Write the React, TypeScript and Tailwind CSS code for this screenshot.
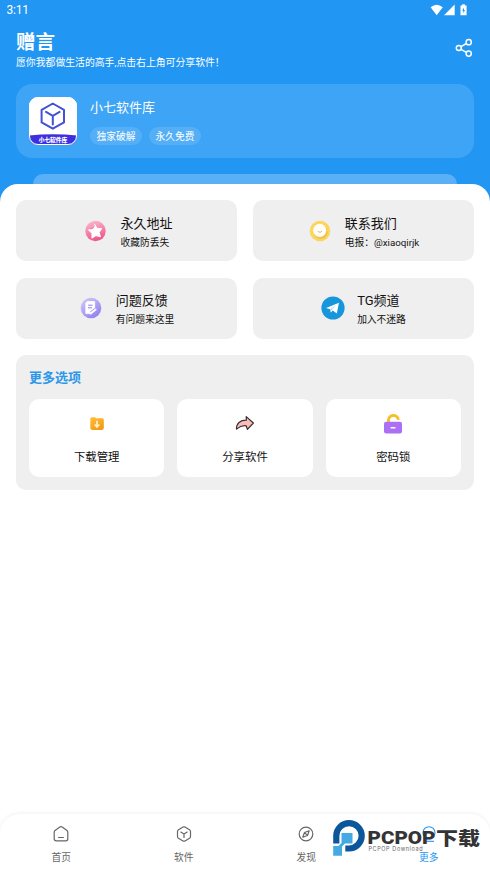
import React from "react";

const StarIcon = () => (
  <svg width="22" height="22" viewBox="0 0 22 22">
    <defs>
      <linearGradient id="pink" x1="0" y1="0" x2="0.3" y2="1">
        <stop offset="0" stopColor="#fbc0d2" />
        <stop offset="1" stopColor="#f0588c" />
      </linearGradient>
    </defs>
    <circle cx="11.500" cy="11" r="10.2" fill="url(#pink)" />
    <path d="M10.7 4.400l2.3 3.900 4.700.3-2.600 3.800 1.400 4.400-4.600-1.200-4 2.600.1-4.900L4.400 10l4.400-1.300z" fill="#fff" stroke="#fff" strokeWidth="1" strokeLinejoin="round" />
    <path d="M6.100 9l3-.9 1.300-2.800" fill="none" stroke="#f06c99" strokeWidth=".9" />
  </svg>
);

const SmileIcon = () => (
  <svg width="22" height="22" viewBox="0 0 22 22">
    <circle cx="11" cy="11" r="10.3" fill="#fbd65c" />
    <circle cx="11.8" cy="12.2" r="6.900" fill="#f3c04c" />
    <circle cx="10.7" cy="10.4" r="6.6" fill="#fffdf5" />
    <path d="M9.200 11.600q1.800 1.800 3.600 0" fill="none" stroke="#d3b277" strokeWidth=".9" strokeLinecap="round" />
  </svg>
);

const NoteIcon = () => (
  <svg width="22" height="22" viewBox="0 0 22 22">
    <defs>
      <linearGradient id="violet" x1="0" y1="0" x2="0.7" y2="1">
        <stop offset="0" stopColor="#d5cdfb" />
        <stop offset="1" stopColor="#9380f0" />
      </linearGradient>
    </defs>
    <circle cx="11" cy="11" r="10.3" fill="url(#violet)" />
    <path d="M7 4.600h7.700v7.400l-4.700 4.600H5.800V6z" fill="#fff" stroke="#fff" strokeWidth=".8" strokeLinejoin="round" />
    <path d="M8.200 8.200h4.400M8 10.800h4" stroke="#8d7ddc" strokeWidth="1" />
    <path d="M10.700 16.600l5-4" stroke="#fff" strokeWidth="1.800" strokeLinecap="round" />
    <path d="M10.200 14.900l4.600-3.500" stroke="#927eee" strokeWidth=".8" />
  </svg>
);

const TelegramIcon = () => (
  <svg width="24" height="24" viewBox="0 0 24 24">
    <circle cx="12" cy="12" r="11.6" fill="#1796db" />
    <path d="M5 12.1L18 6.8l-2.2 10.6-4-2.8-2 1.9-.6-3.300z" fill="#fff" />
    <path d="M9.2 13.2l6.2-4.3-5 5.1-.5 2.3z" fill="#a9d4ed" />
  </svg>
);

const DownloadIcon = () => (
  <svg width="22" height="22" viewBox="0 0 22 22">
    <defs>
      <linearGradient id="folder" x1="0" y1="0" x2="0.6" y2="1">
        <stop offset="0" stopColor="#ffc13d" />
        <stop offset="1" stopColor="#f69a13" />
      </linearGradient>
    </defs>
    <path d="M4.3 5.7q0-1.5 1.5-1.5h3l1.4 1.1h6q1.6 0 1.6 1.6v8.2q0 1.8-1.8 1.8H6.1q-1.8 0-1.8-1.8z" fill="url(#folder)" />
    <path d="M11 7.7v6M8.6 11.500l2.4 2.5 2.4-2.5" fill="none" stroke="#fff4d0" strokeWidth="1.6" />
  </svg>
);

const ForwardIcon = () => (
  <svg width="22" height="22" viewBox="0 0 22 22">
    <path d="M12.2 3.600l7.200 6.400-6 6.400-1.200-3.600c-3.800-.6-6.200.3-9.700 3.300C2.300 10.200 6 7.200 12.400 7.200z" fill="#fcbcb7" stroke="#353033" strokeWidth="1.200" strokeLinejoin="round" />
  </svg>
);

const LockIcon = () => (
  <svg width="22" height="24" viewBox="0 0 22 24">
    <path d="M6.500 12V7.400a4.900 4.600 0 0 1 9.800-.6" fill="none" stroke="#f3c12c" strokeWidth="2.900" />
    <rect x="2" y="8.800" width="18" height="11.700" rx="2" fill="#ab70f4" />
    <rect x="8.500" y="13.900" width="5" height="1.600" rx=".6" fill="#fff" />
  </svg>
);

const HomeIcon = () => (
  <svg width="18" height="18" viewBox="0 0 18 18" fill="none" stroke="#666" strokeWidth="1.200" strokeLinejoin="round" strokeLinecap="round">
    <path d="M2.200 7.200q0-1 .8-1.600l4.800-3.500q1.200-.8 2.400 0L15 5.600q.8.6.8 1.600v6.600q0 2-2 2H4.200q-2 0-2-2zM6.600 12.500h4.800" />
  </svg>
);

const BoxIcon = () => (
  <svg width="18" height="18" viewBox="0 0 18 18" fill="none" stroke="#666" strokeWidth="1.200" strokeLinejoin="round" strokeLinecap="round">
    <path d="M8 2.100q1-.6 2 0l4.500 2.600q1 .6 1 1.700v5.200q0 1.100-1 1.700L10 15.900q-1 .6-2 0l-4.500-2.600q-1-.6-1-1.700V6.400q0-1.100 1-1.700zM5.800 7.100L9 9l3.200-1.900M9 9v3.400" />
  </svg>
);

const CompassIcon = () => (
  <svg width="18" height="18" viewBox="0 0 18 18" fill="none" stroke="#666" strokeWidth="1.200" strokeLinejoin="round">
    <circle cx="9" cy="9" r="6.800" />
    <path d="M12.200 5.800L10.500 10.500 5.800 12.200 7.500 7.500zM7.800 7.800l2.400 2.400" />
  </svg>
);

const ProfileIcon = () => (
  <svg width="18" height="18" viewBox="0 0 18 18" fill="none" stroke="#2196f3" strokeWidth="1.100">
    <circle cx="9" cy="7.700" r="6" />
    <path d="M4 16.300h10" />
  </svg>
);

const links = [
  { icon: <StarIcon />, title: "永久地址", note: "收藏防丢失", width: "w-[22px]", gap: "gap-[14px]", pad: "pl-1" },
  { icon: <SmileIcon />, title: "联系我们", note: "电报：@xiaoqirjk", width: "w-[22px]", gap: "gap-[14px]", pad: "pl-px" },
  { icon: <NoteIcon />, title: "问题反馈", note: "有问题来这里", width: "w-[22px]", gap: "gap-[14px]", pad: "pl-px" },
  { icon: <TelegramIcon />, title: "TG频道", note: "加入不迷路", width: "w-6", gap: "gap-3", pad: "pl-0" },
];

const tools = [
  { icon: <DownloadIcon />, label: "下载管理" },
  { icon: <ForwardIcon />, label: "分享软件" },
  { icon: <LockIcon />, label: "密码锁" },
];

const tabs = [
  { icon: <HomeIcon />, label: "首页", color: "text-[#666]" },
  { icon: <BoxIcon />, label: "软件", color: "text-[#666]" },
  { icon: <CompassIcon />, label: "发现", color: "text-[#666]" },
  { icon: <ProfileIcon />, label: "更多", color: "text-[#2196f3]" },
];

function StatusBar() {
  return (
    <div className="flex h-5 items-center justify-between pl-[6.500px] pr-[22px] text-[12px] leading-5">
      <span className="tracking-[-0.2px]">3:11</span>
      <svg width="38" height="14" viewBox="0 0 38 14" fill="#fff">
        <path d="M.6 4.200Q6.700-.8 12.800 4.200L6.700 12.200z" />
        <path d="M24.700 1.500v10.700H14z" />
        <path d="M30.500 2.500h1.700V1.200h2.700v1.300h1.700v9.700h-6.100z" />
        <path d="M34 4.500l-1.800 3.200h1.100v2.600l1.700-3.300h-1z" fill="#2196f3" />
      </svg>
    </div>
  );
}

function AppLogo() {
  return (
    <svg width="48" height="48" viewBox="0 0 48 48">
      <defs>
        <clipPath id="logo">
          <rect width="48" height="48" rx="9" />
        </clipPath>
      </defs>
      <g clipPath="url(#logo)">
        <rect width="48" height="48" fill="#fff" />
        <path d="M0 38.500Q24 36 48 38.500V48H0z" fill="#3d2fe0" />
      </g>
      <rect x=".5" y=".5" width="47" height="47" rx="8.500" fill="none" stroke="#fff" />
      <path d="M23.800 6.500l11.200 6.300v12.600l-11.200 6.300-11.200-6.300V12.800zM17 14.900l6.800 3.900 6.800-3.900M23.800 18.800v8.700" fill="none" stroke="#4351d6" strokeWidth="2" strokeLinejoin="round" strokeLinecap="round" />
      <text x="24" y="45.300" textAnchor="middle" fontSize="5.800" fontWeight="900" fill="#fff" textLength="28.500">小七软件库</text>
    </svg>
  );
}

function Watermark() {
  return (
    <svg className="absolute bottom-0 right-0" width="170" height="66" viewBox="320 805 170 66">
      <path d="M336.300 843.500V835.800A12.700 12.700 0 1 1 349 848.500H345.300" fill="none" stroke="#0c579b" strokeWidth="6.200" />
      <path d="M341.500 833h11v10.500h-7.500l-3 3v9.200h-8.800v-9.700h5.300l3-3z" fill="#45a9e4" />
      <g fill="#343436">
        <text x="367.500" y="844" fontFamily="Roboto, sans-serif" fontWeight="900" fontSize="17.500" textLength="68" lengthAdjust="spacingAndGlyphs">PCPOP</text>
        <text x="436" y="844.800" fontWeight="900" fontSize="18" textLength="44" lengthAdjust="spacingAndGlyphs">下载</text>
      </g>
      <text x="368.500" y="851" fontFamily="Inter, sans-serif" fontSize="5.500" fill="#68686a" textLength="54">PCPOP Download</text>
    </svg>
  );
}

export default function App() {
  return (
    <div className="relative flex h-[871px] w-[490px] flex-col overflow-hidden bg-[#2196f3] font-['Roboto','Noto_Sans_CJK_SC',sans-serif] text-[#111]">
      <header className="h-[184px] shrink-0 text-white">
        <StatusBar />
        <div className="flex h-16 items-start justify-between pl-4 pr-[17px] pt-2">
          <div className="pt-px">
            <h1 className="h-[26px] text-[19.5px] font-bold leading-[28px]">赠言</h1>
            <p className="text-[9.85px] leading-[15px]">愿你我都做生活的高手,点击右上角可分享软件！</p>
          </div>
          <svg className="mt-[10px]" width="18" height="20" viewBox="0 0 18 20" fill="none" stroke="#fff" strokeWidth="1.500">
            <circle cx="3.800" cy="10" r="2.500" />
            <circle cx="13.700" cy="4.200" r="2.600" />
            <circle cx="13.700" cy="15.600" r="2.600" />
            <path d="M6 8.700l5.400-3.200M6 11.300l5.400 3" />
          </svg>
        </div>
        <section className="mx-4 flex h-[74px] items-center gap-[13px] rounded-2xl bg-[#3ea4f5] pl-[13px]">
          <AppLogo />
          <div className="h-[50px]">
            <h2 className="h-[31px] text-[13px] leading-[23px]">小七软件库</h2>
            <div className="flex gap-[7px] text-[9.75px] leading-[19px]">
              <span className="h-[18px] rounded-full bg-[#55aff6] px-[6.5px]">独家破解</span>
              <span className="h-[18px] rounded-full bg-[#55aff6] px-[6.5px]">永久免费</span>
            </div>
          </div>
        </section>
        <div className="mx-[33px] mt-4 h-[10px] rounded-t-[10px] bg-[#5ab0f7]" />
      </header>

      <div className="flex flex-1 flex-col rounded-t-[18px] bg-white">
        <main className="flex-1 px-4 pt-4">
          <div className="grid grid-cols-2 gap-x-4 gap-y-[16.500px]">
            {links.map((l) => (
              <div key={l.title} className={`flex h-[61px] items-center justify-center rounded-[10px] bg-[#efefef] ${l.gap} ${l.pad}`}>
                <div className={l.width}>{l.icon}</div>
                <div className="pt-[3px]">
                  <div className="text-[13px] leading-5">{l.title}</div>
                  <div className="text-[9.75px] leading-[17px]">{l.note}</div>
                </div>
              </div>
            ))}
          </div>
          <section className="mt-[16.500px] h-[135px] rounded-[10px] bg-[#efefef] px-[13px] pt-[13px]">
            <h3 className="h-[31px] text-[13px] font-bold leading-5 text-[#2c97e8]">更多选项</h3>
            <div className="grid grid-cols-3 gap-[13px]">
              {tools.map((t) => (
                <div key={t.label} className="flex h-[78px] flex-col items-center rounded-[10px] bg-white pt-[14px]">
                  <div className="flex h-[35px] items-start">{t.icon}</div>
                  <div className="text-[11.4px] leading-[18px]">{t.label}</div>
                </div>
              ))}
            </div>
          </section>
        </main>

        <nav className="grid h-[57px] shrink-0 grid-cols-4 rounded-t-[20px] bg-white text-[9.75px] shadow-[0_-1px_4px_rgba(0,0,0,0.06)]">
          {tabs.map((t) => (
            <div key={t.label} className={`flex flex-col items-center pt-[11px] ${t.color}`}>
              {t.icon}
              <span className="mt-[7px] leading-4">{t.label}</span>
            </div>
          ))}
        </nav>
      </div>
      <Watermark />
    </div>
  );
}
